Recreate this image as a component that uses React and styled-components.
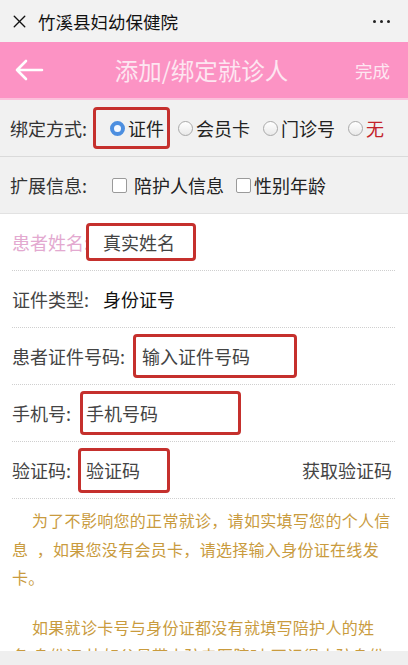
import styled, { createGlobalStyle } from "styled-components";
import { X } from "lucide-react";

const GlobalStyle = createGlobalStyle`
  body {
    margin: 0;
    background: #fff;
    font-family: "Noto Sans CJK SC", "Noto Sans", sans-serif;
  }
`;

const Page = styled.div`
  width: 408px;
  height: 665px;
  overflow: hidden;
  position: relative;
`;

const TopBar = styled.div`
  height: 42px;
  background: #f2f2f2;
  display: flex;
  align-items: center;
  padding: 0 18px 0 9px;
  color: #111;
`;

const TopTitle = styled.div`
  flex: 1;
  margin-left: 8px;
  font-size: 17.5px;
`;

const Dots = styled.div`
  display: flex;
  gap: 4px;
  span {
    width: 3px;
    height: 3px;
    border-radius: 50%;
    background: #222;
  }
`;

const Header = styled.div`
  height: 56px;
  background: #fc93c4;
  border-bottom: 2px solid #fbc1dc;
  display: flex;
  align-items: center;
  padding: 0 18px 0 14px;
  color: #fde6f1;
`;

const HeaderTitle = styled.div`
  flex: 1;
  text-align: center;
  font-size: 23.5px;
  padding-left: 4px;
`;

const Done = styled.div`
  font-size: 17.5px;
`;

const OptionRow = styled.div`
  height: 56px;
  background: #f1f1f1;
  display: flex;
  align-items: center;
  padding-left: 10px;
  font-size: 18px;
  color: #333;
  border-bottom: 1px solid ${(p) => (p.$last ? "#e2e2e2" : "#dadada")};
`;

const OptionLabel = styled.span`
  width: ${(p) => p.$w}px;
  white-space: nowrap;
`;

const RadioItem = styled.label`
  display: flex;
  align-items: center;
  height: 42px;
  box-sizing: border-box;
  white-space: nowrap;
  margin-right: ${(p) => (p.$boxed ? "8px" : "13px")};
  padding: ${(p) => (p.$boxed ? "0 3px 0 14px" : "0")};
  border: ${(p) => (p.$boxed ? "3px solid #c5302d" : "none")};
  border-radius: 4px;
  color: ${(p) => (p.$red ? "#c3222a" : "#222")};
`;

const RadioDot = styled.span`
  width: 15px;
  height: 15px;
  box-sizing: border-box;
  border-radius: 50%;
  margin-right: 3px;
  border: ${(p) => (p.$on ? "4px solid #4d8fe0" : "1px solid #a9a9a9")};
  background: ${(p) => (p.$on ? "#f4f8ff" : "linear-gradient(#fff, #e9e9e9)")};
`;

const CheckItem = styled.label`
  display: flex;
  align-items: center;
  margin-right: 12px;
  white-space: nowrap;
  color: #222;
`;

const CheckBox = styled.span`
  width: 15px;
  height: 15px;
  box-sizing: border-box;
  border: 1px solid #9a9a9a;
  border-radius: 2px;
  background: #fff;
  margin-right: ${(p) => p.$gap}px;
`;

const Form = styled.div`
  padding: 0 13px 0 12px;
`;

const FieldRow = styled.div`
  height: 56px;
  display: flex;
  align-items: center;
  font-size: 18px;
  color: #444;
  border-bottom: 1px dotted #cfcfcf;
`;

const FieldLabel = styled.span`
  color: ${(p) => (p.$pink ? "#e3a9d0" : "#444")};
  white-space: nowrap;
`;

const InputBox = styled.span`
  display: flex;
  align-items: center;
  box-sizing: border-box;
  width: ${(p) => p.$w}px;
  height: ${(p) => p.$h}px;
  margin-left: ${(p) => p.$ml}px;
  padding-left: ${(p) => p.$pl}px;
  border: 3px solid #c5302d;
  border-radius: 4px;
  color: #444;
  background: #fff;
  white-space: nowrap;
`;

const Value = styled.span`
  margin-left: 14px;
  color: #111;
`;

const Action = styled.span`
  margin-left: auto;
  margin-right: 3px;
  color: #444;
`;

const Notice = styled.div`
  padding: 7px 16px 0 12px;
  color: #c99b3e;
  font-size: 16px;
  letter-spacing: 0.3px;
  line-height: 28.5px;
  p {
    margin: 0 0 21px;
    text-indent: 20px;
  }
`;

const BottomStrip = styled.div`
  position: absolute;
  left: 0;
  right: 0;
  bottom: 0;
  height: 14px;
  background: #efefef;
`;

function BackArrow() {
  return (
    <svg width="30" height="22" viewBox="0 0 30 22">
      <path
        d="M28 11H3M12 2L3 11l9 9"
        fill="none"
        stroke="#fff"
        strokeWidth="2.6"
        strokeLinecap="round"
        strokeLinejoin="round"
      />
    </svg>
  );
}

const bindTypes = [
  { text: "证件", on: true, boxed: true },
  { text: "会员卡" },
  { text: "门诊号" },
  { text: "无", red: true },
];

export default function App() {
  return (
    <Page>
      <GlobalStyle />
      <TopBar>
        <X size={21} strokeWidth={1.6} />
        <TopTitle>竹溪县妇幼保健院</TopTitle>
        <Dots>
          <span />
          <span />
          <span />
        </Dots>
      </TopBar>

      <Header>
        <BackArrow />
        <HeaderTitle>添加/绑定就诊人</HeaderTitle>
        <Done>完成</Done>
      </Header>

      <OptionRow>
        <OptionLabel $w={83}>绑定方式:</OptionLabel>
        {bindTypes.map((t) => (
          <RadioItem key={t.text} $boxed={t.boxed} $red={t.red}>
            <RadioDot $on={t.on} />
            {t.text}
          </RadioItem>
        ))}
      </OptionRow>

      <OptionRow $last>
        <OptionLabel $w={102}>扩展信息:</OptionLabel>
        <CheckItem>
          <CheckBox $gap={7} />
          陪护人信息
        </CheckItem>
        <CheckItem>
          <CheckBox $gap={3} />
          性别年龄
        </CheckItem>
      </OptionRow>

      <Form>
        <FieldRow>
          <FieldLabel $pink>患者姓名:</FieldLabel>
          <InputBox $w={110} $h={38} $ml={-3} $pl={14}>
            真实姓名
          </InputBox>
        </FieldRow>
        <FieldRow>
          <FieldLabel>证件类型:</FieldLabel>
          <Value>身份证号</Value>
        </FieldRow>
        <FieldRow>
          <FieldLabel>患者证件号码:</FieldLabel>
          <InputBox $w={164} $h={44} $ml={8} $pl={6}>
            输入证件号码
          </InputBox>
        </FieldRow>
        <FieldRow>
          <FieldLabel>手机号:</FieldLabel>
          <InputBox $w={161} $h={44} $ml={9} $pl={3}>
            手机号码
          </InputBox>
        </FieldRow>
        <FieldRow>
          <FieldLabel>验证码:</FieldLabel>
          <InputBox $w={92} $h={45} $ml={7} $pl={5}>
            验证码
          </InputBox>
          <Action>获取验证码</Action>
        </FieldRow>
      </Form>

      <Notice>
        <p>
          为了不影响您的正常就诊，请如实填写您的个人信息{"\u2002"}
          ，如果您没有会员卡，请选择输入身份证在线发卡。
        </p>
        <p>
          如果就诊卡号与身份证都没有就填写陪护人的姓名,身份证,比如父母带小孩去医院时,不记得小孩身份证号,就填写父母的信息。
        </p>
      </Notice>

      <BottomStrip />
    </Page>
  );
}
